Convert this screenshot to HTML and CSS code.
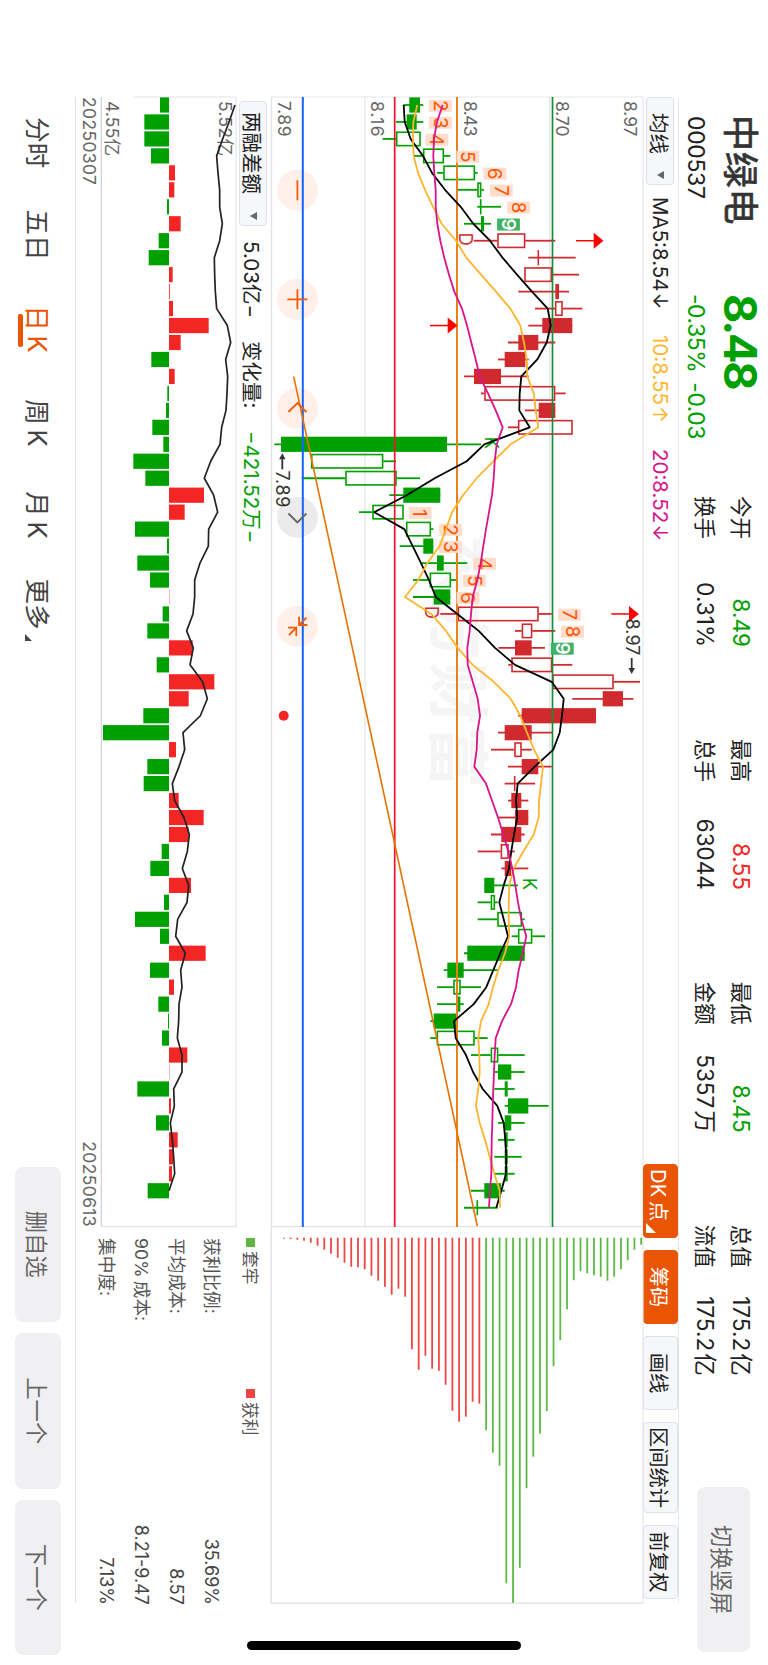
FILE: index.html
```html
<!DOCTYPE html>
<html lang="zh-CN">
<head>
<meta charset="utf-8">
<title>中绿电 000537</title>
<link rel="stylesheet" href="styles.css">
</head>
<body>
<div class="device">
<div class="screen">
  <header class="header">
    <div class="stock">
      <div class="name">中绿电</div>
      <div class="code">000537</div>
    </div>
    <div class="quote">
      <div class="price">8.48</div>
      <div class="change"><span>-0.35%</span><span>-0.03</span></div>
    </div>
    <dl class="facts">
      <div class="fact"><dt>今开</dt><dd class="down">8.49</dd></div>
      <div class="fact"><dt>最高</dt><dd class="up">8.55</dd></div>
      <div class="fact"><dt>最低</dt><dd class="down">8.45</dd></div>
      <div class="fact"><dt>总值</dt><dd>175.2&hairsp;亿</dd></div>
      <div class="fact"><dt>换手</dt><dd>0.31%</dd></div>
      <div class="fact"><dt>总手</dt><dd>63044</dd></div>
      <div class="fact"><dt>金额</dt><dd>5357&hairsp;万</dd></div>
      <div class="fact"><dt>流值</dt><dd>175.2&hairsp;亿</dd></div>
    </dl>
    <button class="soft rotate">切换竖屏</button>
  </header>

  <div class="toolbar">
    <button class="select select-ma">均线<i class="caret"></i></button>
    <span class="ma ma5">MA5:8.54<i class="trend">↓</i></span>
    <span class="ma ma10">10:8.55<i class="trend">↑</i></span>
    <span class="ma ma20">20:8.52<i class="trend">↓</i></span>
    <div class="tools">
      <button class="tool on dk">DK&thinsp;点<i class="corner"></i></button>
      <button class="tool on">筹码</button>
      <button class="tool">画线</button>
      <button class="tool wide">区间统计</button>
      <button class="tool">前复权</button>
    </div>
  </div>

  <main class="board">
    <section class="left">
      <svg id="kline" class="kline" width="1130" height="372" viewBox="0 0 1130 372"></svg>
      <div class="subbar">
        <button class="select select-sub">两融差额<i class="caret"></i></button>
        <span class="sub-value">5.03亿−</span>
        <span class="sub-label">变化量:</span>
        <span class="sub-delta">−421.52万−</span>
      </div>
      <svg id="margin" class="margin" width="1130" height="135" viewBox="0 0 1130 135"></svg>
      <div class="dates"><span>20250307</span><span>20250613</span></div>
    </section>
    <section class="right">
      <svg id="chips" class="chips" width="376" height="376" viewBox="0 0 376 376"></svg>
      <div class="legend">
        <span class="key"><i class="dot lose"></i>套牢</span>
        <span class="key"><i class="dot win"></i>获利</span>
      </div>
      <div class="costs">
        <div class="cost"><span>获利比例:</span><b>35.69%</b></div>
        <div class="cost"><span>平均成本:</span><b>8.57</b></div>
        <div class="cost"><span>90%&thinsp;成本:</span><b>8.21-9.47</b></div>
        <div class="cost"><span>集中度:</span><b>7.13%</b></div>
      </div>
    </section>
  </main>

  <footer class="footer">
    <nav class="tabs">
      <a class="tab">分时</a>
      <a class="tab">五日</a>
      <a class="tab active">日&thinsp;K</a>
      <a class="tab">周&thinsp;K</a>
      <a class="tab">月&thinsp;K</a>
      <a class="tab more">更多</a>
    </nav>
    <div class="actions">
      <button class="soft">删自选</button>
      <button class="soft">上一个</button>
      <button class="soft">下一个</button>
    </div>
  </footer>
  <div class="home"></div>
</div>
</div>
<script src="chart.js"></script>
</body>
</html>
```

FILE: styles.css
```css
* { box-sizing: border-box; }
html, body { margin: 0; padding: 0; background: #fff; }
body { font-family: Inter, "Noto Sans CJK SC", sans-serif; color: #222; }
button { font: inherit; border: 0; padding: 0; color: inherit; white-space: nowrap; }
i { font-style: normal; }

.device { width: 768px; height: 1665px; overflow: hidden; }
.screen {
  position: relative;
  width: 1665px; height: 768px;
  transform-origin: 0 0;
  transform: translateX(768px) rotate(90deg);
  display: flex; flex-direction: column;
  white-space: nowrap;
}

.header { height: 89px; padding-left: 115px; display: flex; flex: none; }
.stock { width: 179px; padding-top: 7px; }
.name { font-size: 36px; line-height: 42px; letter-spacing: .7px; color: #333; -webkit-text-stroke: .7px #333; }
.code { font-size: 23px; line-height: 46px; letter-spacing: -.35px; padding-left: 1px; }
.quote { width: 202px; padding-top: 7px; color: #00a000; }
.price { font-size: 45px; line-height: 42px; font-weight: 700; letter-spacing: -2.2px; }
.change { font-size: 23px; line-height: 46px; display: flex; gap: 10px; letter-spacing: -.5px; }
.facts {
  margin: 0; padding-top: 9px; width: 878px; height: 81px;
  display: grid; grid-template-columns: repeat(4, 151px); column-gap: 91.9px;
  grid-auto-rows: 36px; font-size: 22.5px; line-height: 36px;
}
.fact { display: flex; justify-content: space-between; }
.fact dt { font-size: 21.5px; }
.fact dd { margin: 0; }
.up { color: #f42525; }
.down { color: #00a000; }
.soft { background: #f0f0f3; border-radius: 8px; color: #666; font-size: 22.3px; }
.rotate { width: 165px; height: 53px; margin: 18px 0 0 113px; }

.toolbar {
  height: 36px; width: 1506px; margin-left: 97px; flex: none;
  border-top: 1px solid #e6e7ec;
  display: flex; align-items: center; font-size: 20.5px;
}
.select {
  height: 28px; background: #f6f7fa; border: 1px solid #dfe0e8; border-radius: 4px;
  display: flex; align-items: center; justify-content: space-between; color: #222;
}
.select-ma { width: 88px; padding: 0 5px 0 15px; margin-right: 12px; }
.caret { border: 4px solid transparent; border-top: 7px solid #666; border-bottom: 0; }
.ma { line-height: 34px; }
.trend { margin-left: 1px; }
.ma5 { width: 138px; }
.ma10 { width: 114px; color: #ffb52e; }
.ma20 { width: 150px; color: #d9138c; }
.tools { margin-left: auto; display: flex; gap: 12px; padding-right: 4px; }
.tool {
  width: 74px; height: 35px; border-radius: 4px; background: #f6f7fa;
  border: 1px solid #dfe0e8; font-size: 20.3px;
}
.tool.wide { width: 91px; }
.tool.on { background: #ea5504; border-color: #ea5504; color: #fff; }
.dk { position: relative; text-align: left; padding-left: 4px; }
.corner {
  position: absolute; right: 4px; bottom: 2px;
  border-left: 10px solid transparent; border-bottom: 10px solid #fff;
}

.board { margin-left: 97px; display: flex; height: 567px; flex: none; }
.left { width: 1130px; }
.left svg, .right svg { display: block; overflow: visible; }
.subbar { height: 35px; padding-left: 4px; display: flex; align-items: center; font-size: 20.5px; }
.select-sub { width: 125px; padding: 0 5px 0 10px; margin-right: 15px; }
.sub-value { width: 100px; }
.sub-label { width: 90px; }
.sub-delta { color: #00a000; }
.dates {
  height: 25px; display: flex; justify-content: space-between;
  font-size: 17.5px; line-height: 24px; letter-spacing: .35px; color: #666;
}

.right { width: 376px; }
.legend { height: 32px; display: flex; padding-left: 11px; color: #555; font-size: 16.7px; }
.key { width: 151px; display: flex; align-items: center; gap: 4px; }
.dot { width: 9px; height: 9px; }
.lose { background: #5ab93e; }
.win { background: #ee4444; }
.costs { padding: 6px 0 0 11px; margin-right: -2px; }
.cost { height: 35px; line-height: 35px; display: flex; justify-content: space-between; font-size: 17.7px; color: #555; }
.cost b { font-weight: 400; color: #444; font-size: 18px; }

.footer {
  margin-left: 97px; width: 1506px; height: 76px; flex: none;
  border-top: 1px solid #e2e2e4; display: flex; justify-content: space-between;
}
.tabs { display: grid; grid-template-columns: 91.5px 93px 95px 93px 91px 87px; }
.tab { height: 76px; line-height: 76px; text-align: center; font-size: 25.5px; color: #444; position: relative; }
.tab.active { color: #ea5504; }
.tab.active::after {
  content: ""; position: absolute; left: 32px; top: 52px;
  width: 33px; height: 4.5px; border-radius: 2px; background: #ea5504;
}
.more::after {
  content: ""; position: absolute; left: 73px; top: 43px;
  border-left: 7px solid transparent; border-bottom: 7px solid #444;
}
.actions { display: flex; gap: 11px; margin: 14px -52px 0 0; }
.actions .soft { width: 155.5px; height: 46px; }
.home {
  position: absolute; left: 1641px; top: 247px;
  width: 9px; height: 274px; border-radius: 5px; background: #000;
}

.axis { font-size: 17.5px; fill: #666; }
.peak { font-size: 18px; fill: #333; }
.brand { font-size: 62px; font-weight: 700; fill: #f5f5f5; }
.count { font-size: 19px; fill: #ff5500; text-anchor: middle; }
.count.nine { fill: #fff; font-weight: 600; }
.flag { font-size: 18.5px; text-anchor: middle; }
```

FILE: chart.js
```javascript
const GREEN = '#00a000', RED = '#d02a2e';
const STEP = 16.965;
const X = i => 8 + STEP * i;
const Y = level => 643 - level;

function el(svg, tag, attrs, text) {
  const n = document.createElementNS('http://www.w3.org/2000/svg', tag);
  for (const k in attrs) n.setAttribute(k, attrs[k]);
  if (text !== undefined) n.textContent = text;
  svg.appendChild(n);
  return n;
}
const line = (svg, x1, y1, x2, y2, stroke, w) =>
  el(svg, 'line', { x1, y1, x2, y2, stroke, 'stroke-width': w });
const curve = (svg, pts, stroke, w) =>
  el(svg, 'polyline', { points: pts.map(p => p.join(',')).join(' '), fill: 'none', stroke, 'stroke-width': w, 'stroke-linejoin': 'round' });

/* kind (f filled, h hollow, d doji), low, body bottom, body top, high */
const candles = [
['f',403.3,409.3,420,423.3],['f',396,406.7,416.7,423.3],['h',382.7,396,420.7,420.7],['h',414,423,444,450.3],
['h',437,443.3,475,477.7],['h',457.3,477.3,481.3,484],['d',477.3,480.7,480.7,501],['f',464,481,484,491],
['h',473.7,497.3,525.3,555.3],['d',528.3,538.3,538.3,575.7],['h',524.3,524.3,552,579],['f',518.3,555.3,559,569],
['h',535,555,562.7,582.3],['f',528.3,542.3,572.3,572.3],['f',508,518.3,538.3,555.3],['f',498,504.7,525.3,528.7],
['f',464,474,501,528.7],['h',481,484.3,555.3,565.7],['f',525,538.7,555.3,555.3],['h',508,518,572.7,572.7],
['f',274.3,281,447,481],['h',311,311,383.3,396],['h',301.7,345.3,396.7,420],['f',389.3,403.3,440.3,440.3],
['h',359,372.3,403.7,403.7],['h',406,406,431,433.3],['f',399.7,423.3,433.3,433.3],['f',420.3,437,443.7,467.3],
['h',413,429.7,451,456.7],['f',413,433.7,450.3,450.3],['h',440.3,457.7,538.7,551.7],['h',515,521.7,532.3,555.3],
['f',498.3,515,531.7,545],['h',508.3,511.3,552.3,572.3],['h',552.3,552.3,613.7,640],['f',572.3,602.7,623,633.3],
['f',518.3,521.7,596,596],['f',498,504.7,531.7,552.3],['h',491,514.3,521.7,531.7],['f',508,521.7,538.3,551.7],
['d',504.7,514.7,514.7,535],['f',508,511.3,521.3,528.3],['f',498,515,528.3,528.3],['f',491,501.3,521.3,524.7],
['h',477.7,500.7,508.7,514.7],['f',501.3,504.7,511.3,528.3],['f',484.3,484.3,494.3,518],['h',477.7,490.7,495,497.7],
['h',477.7,497.3,522,524.7],['h',511.7,518,532.3,545],['f',464,467.3,524.7,524.7],['f',443.7,447.3,463.7,497.7],
['h',437,453.3,460.7,481],['f',437,457.3,460.3,463.7],['f',430.3,433.7,457,457],['h',430.3,436.7,474.7,487.7],
['h',471,490.7,498.3,524.7],['f',495,498,511.3,524.7],['f',494.3,504.7,507.7,514.7],['f',504.7,508,528.3,548.7],
['f',498,504.7,511.3,524.7],['f',498,504.7,507.7,514.7],['f',494.3,504.7,507.7,521.7],['f',495,504.7,507.7,514.7],
['f',471,484.3,501,504.7],['d',464,477.3,477.3,497.7]];
const isRed = i => (i >= 8 && i < 20) || (i >= 30 && i < 46);

const ma5 = [403.7,404.7,410.7,423,432,445,460.7,473.3,490,502.5,517,532,547.7,550.7,546.7,537.3,521.3,519.7,519.3,529.7,484.3,466.7,434.7,406.7,374.3,404.3,412.7,421,429,435.7,457.3,478.7,495,515,551.7,563.7,562,559.7,553.3,534.7,517.7,516,517.3,514,511.3,509,503.7,499.3,503.7,508,500.3,493.3,486.3,473.7,454,455.7,466,473,482.7,497.3,503.7,505.3,506.3,506,501.3,496.3];
const ma10 = [417.3,413.3,413,413.7,418,425,433,441.7,456,466.3,481,496,510.3,520.3,524,526.7,527.3,533.7,535.7,538.3,510.7,493.3,476.7,463,452,446,439.7,427.3,418.3,405,431.3,446,457.7,472.7,493.7,510.7,520.3,527,534,543,541,539,538.7,533.7,523.3,513.7,509.3,508.7,508.7,509.3,505,498.3,493,488.7,481,478.3,479.3,479.7,478.3,476,479.7,485,489.7,494.3,499.7,500];
const ma20 = [442.7,437,434,433.3,434.3,435.7,435.7,437.3,440.3,444.3,449,454.3,462,467,471.3,475.7,479.7,488,495.7,502.7,496.7,494.7,493.7,492,489,486,483.3,480.7,477.3,472.7,471,469.7,467.3,467.7,472.7,477.7,480,477.3,476.7,474.3,486,492,498,503.3,508.3,512.3,515.3,518,521.3,526.3,522.7,518.7,516,511,502,495.7,494.7,494,493.3,492.7,492.3,491.7,491.5,491.3,490,489];

/* sequence marks: candle index, level, digit */
const marks = [[0,440.3,2],[1,440.3,3],[2,437,4],[3,467.8,5],[4,495,6],[5,501.3,7],[6,518.5,8],[7,508.5,9],
[24,420.2,1],[25,450.5,2],[26,450.5,3],[27,484.5,4],[28,474.3,5],[29,468,6],[30,569.3,7],[31,572.5,8],[32,562.3,9]];

function drawKline() {
  const s = document.getElementById('kline');
  el(s, 'text', { x: 437, y: 208, class: 'brand', textLength: 254 }, '东方财富');
  line(s, 0, 0, 1130, 0, '#e6e7ec', 1.2);
  line(s, 0, Y(549.7), 1130, Y(549.7), '#e4e8ec', 1.4);
  line(s, 0, Y(365), 1130, Y(365), '#e8ecf1', 1.6);
  line(s, 0, 371.5, 1130, 371.5, '#e1e2e9', 1.3);
  line(s, 0, 0, 0, 372, '#e6e7ec', 1.2);
  line(s, 1129.7, 0, 1129.7, 372, '#e1e2e9', 1.2);

  [[8.97,624],[8.7,556.3],[8.43,463.5],[8.16,370.5],[7.89,278]].forEach(([t, l]) =>
    el(s, 'text', { x: 4, y: Y(l), class: 'axis', textLength: 35.5 }, t.toFixed(2)));

  for (let k = 0; k < 5; k++) {
    const cx = 93.3 + 109 * k;
    el(s, 'circle', { cx, cy: Y(297.5), r: 20.5, fill: k === 3 ? '#ebebeb' : '#fef0e8' });
  }

  candles.forEach(([kind, lo, b, t, hi], i) => {
    const c = isRed(i) ? RED : GREEN, x = X(i);
    if (kind === 'h') {
      line(s, x, Y(lo), x, Y(b), c, 1.8);
      line(s, x, Y(t), x, Y(hi), c, 1.8);
      el(s, 'rect', { x: x - 6.7, y: Y(t) + .7, width: 13.4, height: t - b - 1.4, fill: 'none', stroke: c, 'stroke-width': 1.6 });
    } else {
      line(s, x, Y(lo), x, Y(hi), c, 1.8);
      if (kind === 'f') el(s, 'rect', { x: x - 7.6, y: Y(t), width: 15.2, height: t - b, fill: c });
      else line(s, x - 7.6, Y(t), x + 7.6, Y(t), c, 1.6);
    }
  });

  [[552.5,'#178c37',1.7],[457,'#e8811c',2],[394.7,'#f5112e',1.7],[302.8,'#1463ff',2]].forEach(([l, c, w]) =>
    line(s, 0, Y(l), 1130, Y(l), c, w));
  line(s, 279.7, Y(293.7), 1129, Y(477.3), '#e67300', 1.6);

  marks.forEach(([i, l, d]) => {
    const nine = d === 9, x = X(i) + .8;
    el(s, 'rect', { x: x - 6, y: Y(l) - 11.4, width: 12, height: 22.8, fill: nine ? '#3fb265' : '#ffdccb' });
    el(s, 'text', { x, y: Y(l) + 6.8, class: nine ? 'count nine' : 'count' }, d);
  });
  [[8,465.7,'D',RED],[30,432,'D',RED],[20,492,'K',GREEN],[46,530,'K',GREEN]].forEach(([i, l, t, fill]) =>
    el(s, 'text', { x: X(i) - 1.5, y: Y(l) + 6.7, class: 'flag', fill }, t));

  [[ma5,'#000'],[ma10,'#ffb52e'],[ma20,'#d9138c']].forEach(([m, c]) =>
    curve(s, m.map((l, i) => [X(i), Y(l)]), c, 1.8));

  [[8,576],[13,430],[30,611.3]].forEach(([i, l]) => {
    line(s, X(i), Y(l), X(i), Y(l + 18), '#f00', 1.5);
    el(s, 'path', { d: `M${X(i)} ${Y(l + 27.5)}l8 9.8h-16z`, fill: '#f00' });
  });

  el(s, 'text', { x: 521.5, y: Y(625.8), class: 'peak', textLength: 37 }, '8.97');
  el(s, 'path', { d: `M561 ${Y(631.7)}h12`, stroke: '#333', 'stroke-width': 1.8 });
  el(s, 'path', { d: `M577 ${Y(631.7)}l-6 -3.2v6.4z`, fill: '#333' });
  el(s, 'text', { x: 373.5, y: Y(276), class: 'peak', textLength: 37 }, '7.89');
  el(s, 'path', { d: `M372.3 ${Y(282.3)}h-12`, stroke: '#333', 'stroke-width': 1.8 });
  el(s, 'path', { d: `M356.3 ${Y(282.3)}l6 -3.2v6.4z`, fill: '#333' });

  const cy = Y(297.4);
  const icon = (d, c) => el(s, 'path', { d, fill: 'none', stroke: c, 'stroke-width': 1.8 });
  icon(`M83.3 ${cy}h20`, '#f25a0a');
  icon(`M192.3 ${cy}h20M202.3 ${cy - 10}v20`, '#f25a0a');
  icon(`M315 ${cy - 9}l-9 9l9 9`, '#f25a0a');
  icon(`M416.5 ${cy - 9}l9 9l-9 9`, '#666');
  icon(`M519.7 ${cy - 1.7}h8.3v-8.3M528 ${cy - 1.7}l-7.4 -7.4M539 ${cy + 1.1}h-8.3v8.3M530.7 ${cy + 1.1}l7.4 7.3`, '#f25a0a');
  el(s, 'circle', { cx: 618.8, cy: Y(283.7), r: 5, fill: '#f42525' });
}

/* margin-balance changes: bar tips and balance curve in thirds of a pixel */
const tips = [-240,-193,-193,-213,285,283,-261,302,-236,-206,278,269.5,279,386,302,-214,284,-262,-258,-217,-250,-160,-196,372,314,-165,-261,-172,-210,268,-248,-202,338,-230,403,326,-190,-69,288,-202,-191,296,371,326,-245,-211,333,-252,-165,-240,377,-210,282,-235,-264,-246,322,268,-172,273,-228,293,279,276,-203];
const balance = [465,447,428,410,414,419,419,427,419,403,404,406,410,442,452,437,443,441,438,425,420,392,373,401,413,386,385,360,344,344,339,320,340,330,368,382,361,309,314,297,277,284,312,328,322,307,326,321,293,287,316,302,306,297,296,292,306,306,281,283,271,277,281,284,267];

function drawMargin() {
  const s = document.getElementById('margin');
  const V = z => 156 - z / 3;
  line(s, 0, 0, 1130, 0, '#e3e4e8', 1.2);
  line(s, 0, 134.7, 1130, 134.7, '#cfcfd3', 1.2);
  line(s, 0, 0, 0, 103, '#e3e4e8', 1.2);
  line(s, 1129.7, 0, 1129.7, 135, '#e3e4e8', 1.2);
  el(s, 'text', { x: 4, y: 17.5, class: 'axis', textLength: 55 }, '5.52亿');
  el(s, 'text', { x: 4, y: 130, class: 'axis', textLength: 55 }, '4.55亿');
  tips.forEach((t, i) => {
    const z = Math.abs(t), y1 = Math.min(V(z), V(267)), h = Math.abs(z - 267) / 3;
    el(s, 'rect', { x: X(i) - 7.6, y: y1, width: 15.2, height: h, fill: t > 0 ? '#f42525' : GREEN });
  });
  curve(s, balance.map((z, i) => [X(i), V(z)]), '#222', 1.7);
}

const chips = [1,1.3,2,3,5,8,12,16,20,25,29,29.5,31.5,38,43,49,57,51,59,111.5,132,118,131,133,147,173,184,179,164,166,192.5,215,228,345.5,365,330,250.5,219,196,173.5,128.5,102.5,71.5,42.5,33.5,35.5,37.5,39,43,39,31.5,22.5,12,7];

function drawChips() {
  const s = document.getElementById('chips');
  line(s, 0, 0, 376, 0, '#e6e7ec', 1.2);
  line(s, 0, 371.8, 376.5, 371.8, '#dfe0e9', 1.3);
  line(s, 376.2, 0, 376.2, 372, '#dfe0e9', 1.3);
  chips.forEach((w, k) => {
    const y = Y(283.8 + 6.743 * k);
    line(s, 10.7, y, 10.7 + w, y, k < 30 ? '#ee4646' : '#5aba42', 1.8);
  });
}

drawKline();
drawMargin();
drawChips();
```
